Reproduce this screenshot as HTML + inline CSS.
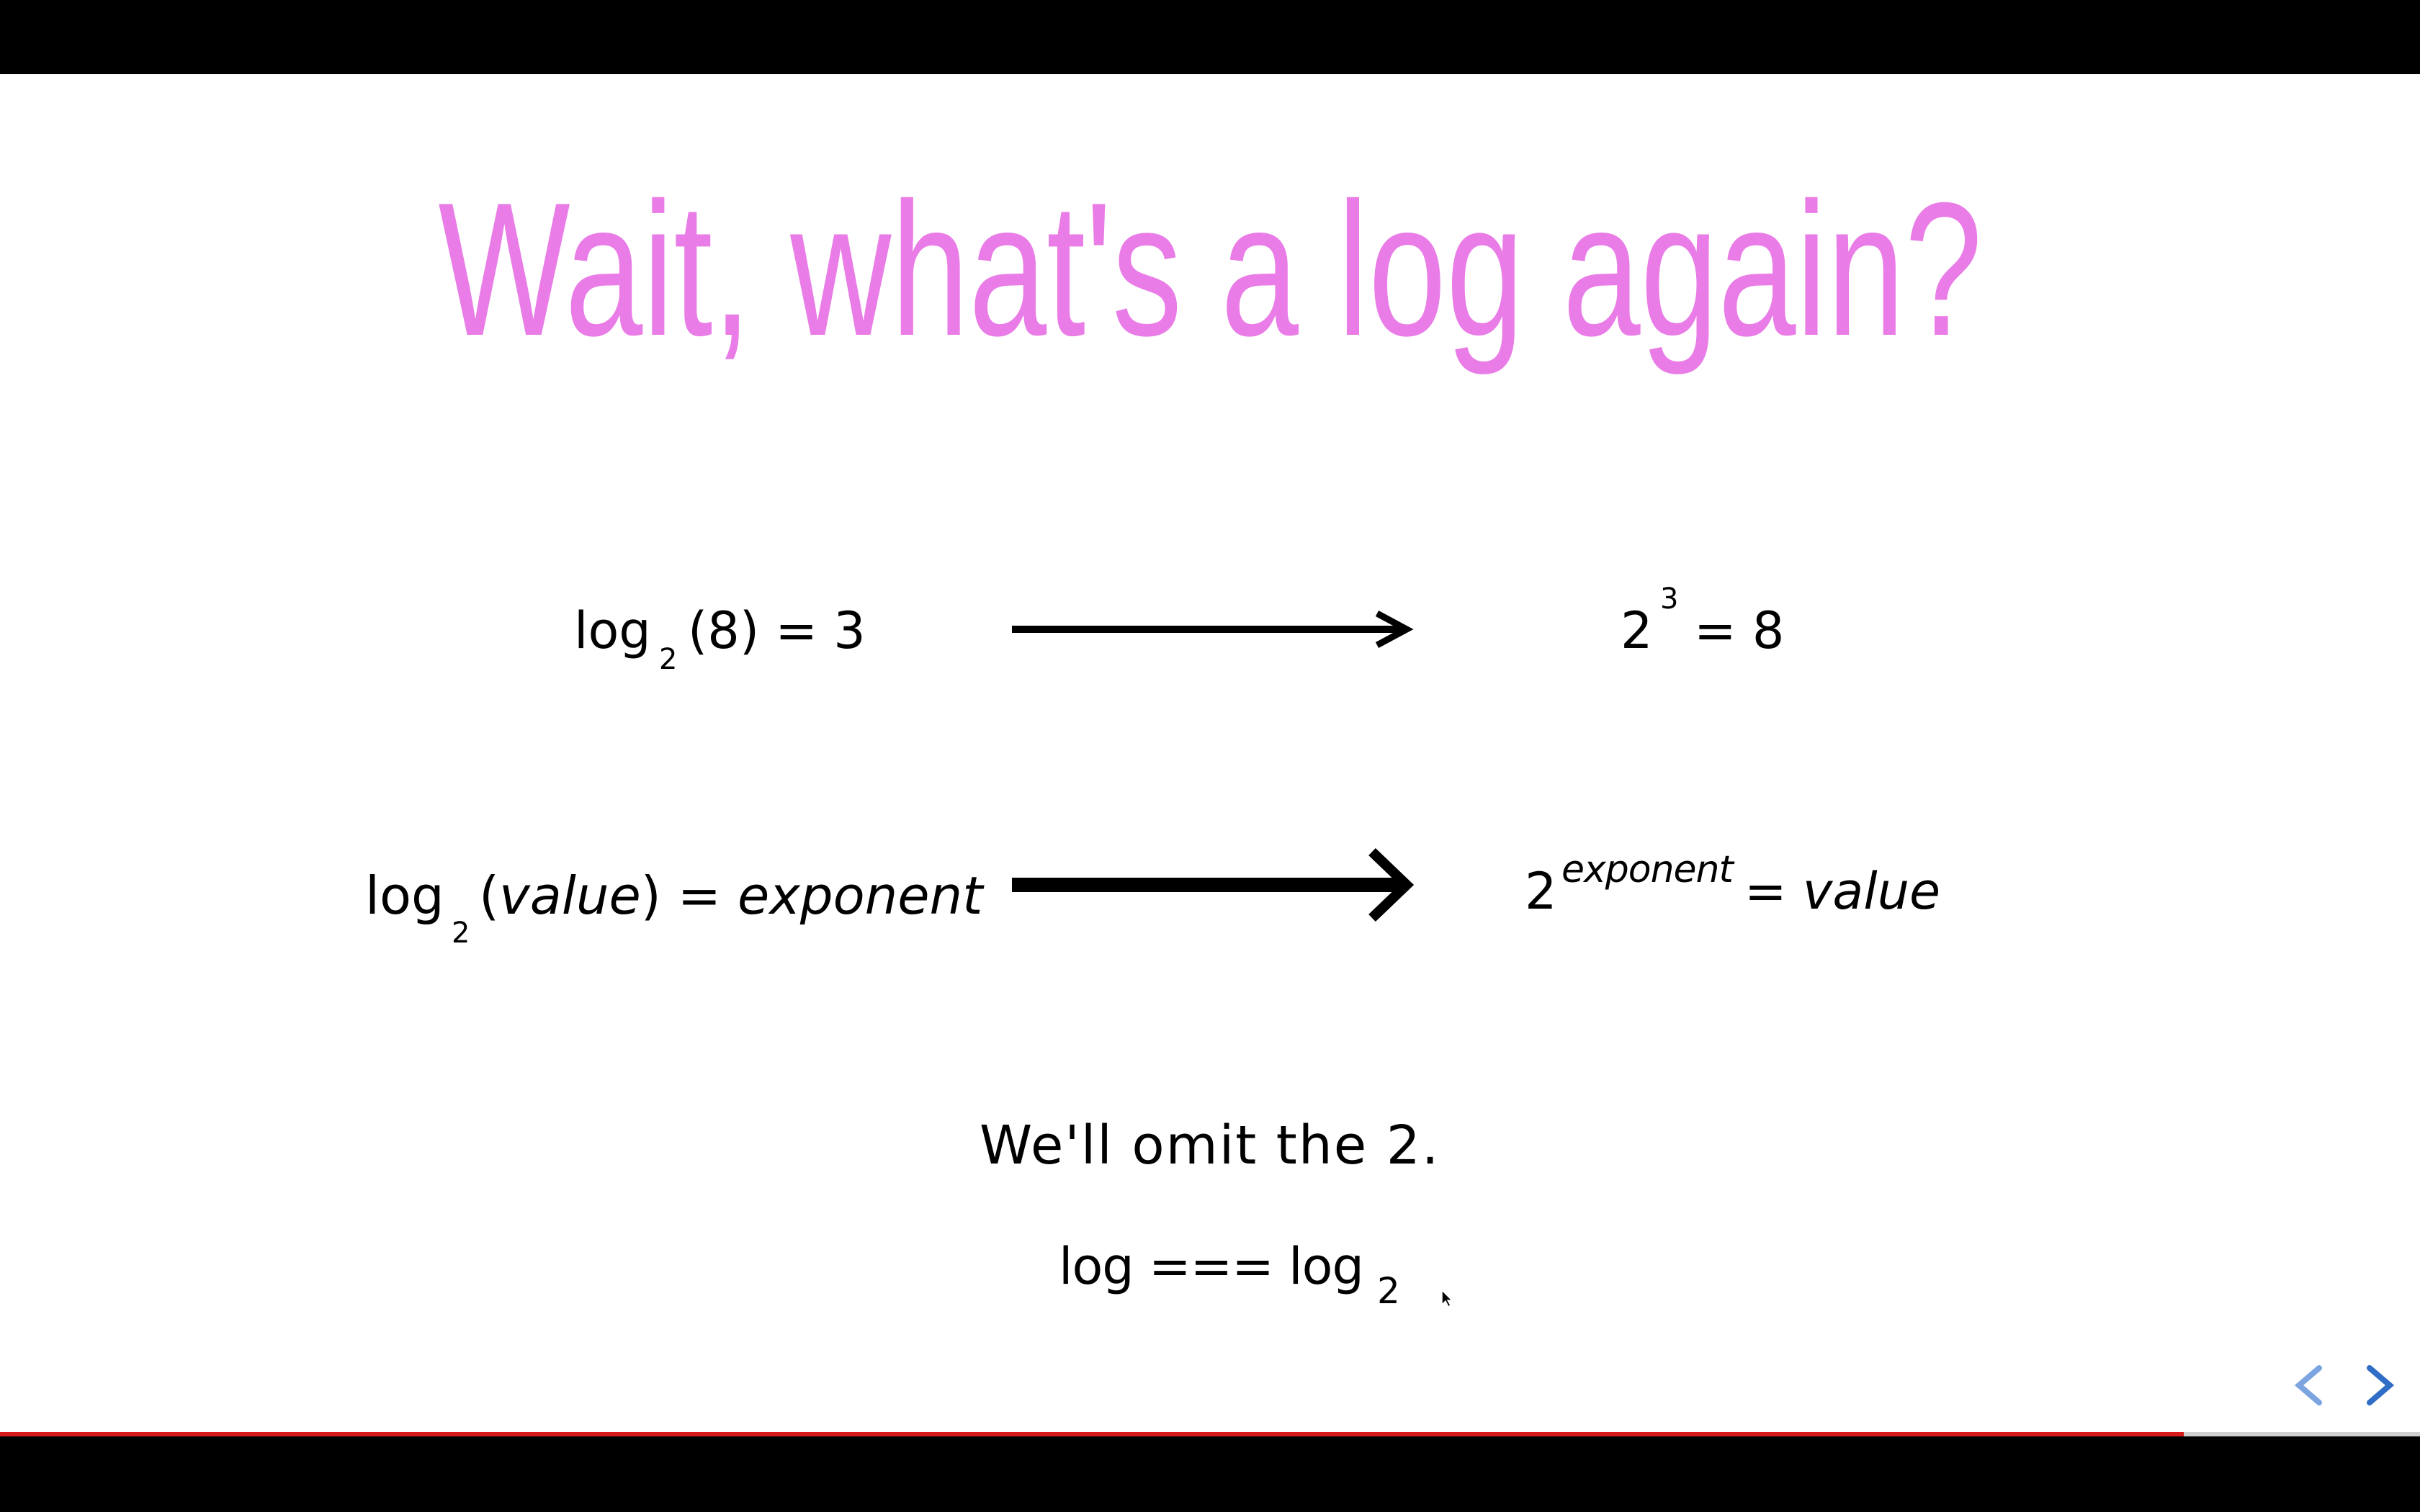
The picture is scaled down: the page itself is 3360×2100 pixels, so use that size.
<!DOCTYPE html>
<html><head><meta charset="utf-8"><style>
body{margin:0;width:3360px;height:2100px;background:#000;position:relative;overflow:hidden}
.slide{position:absolute;left:0;top:103px;width:3360px;height:1892px;background:#fff}
.t{position:absolute;line-height:1;white-space:nowrap;color:#000;font-family:"DejaVu Sans","Liberation Sans",sans-serif}
.title{position:absolute;left:0;width:3360px;top:242px;text-align:center;line-height:1;font-family:"Liberation Sans Narrow","Liberation Sans",sans-serif;font-size:264px;color:#e97ce6}
.title span{display:inline-block;transform:scaleX(0.735);transform-origin:50% 50%;margin-left:0px}
i{font-style:italic}
</style></head><body>
<div class="slide"></div>
<div class="title"><span>Wait, what's a log again?</span></div>

<!-- row 1 -->
<div class="t" style="left:797px;top:841px;font-size:70px">log</div>
<div class="t" style="left:915px;top:896px;font-size:40px">2</div>
<div class="t" style="left:955px;top:841px;font-size:70px">(8) = 3</div>
<svg style="position:absolute;left:1405px;top:847px" width="565" height="56">
<line x1="0" y1="27" x2="545" y2="27" stroke="#000" stroke-width="10"/>
<polyline points="507,5 548,27 507,49" fill="none" stroke="#000" stroke-width="9"/>
</svg>
<div class="t" style="left:2250px;top:841px;font-size:70px">2</div>
<div class="t" style="left:2305px;top:812px;font-size:40px">3</div>
<div class="t" style="left:2352px;top:841px;font-size:70px">= 8</div>

<!-- row 2 -->
<div class="t" style="left:507px;top:1208px;font-size:72px">log</div>
<div class="t" style="left:627px;top:1276px;font-size:40px">2</div>
<div class="t" style="left:665px;top:1208px;font-size:72px">(<i>value</i>) = <i>exponent</i></div>
<svg style="position:absolute;left:1405px;top:1177px" width="565" height="110">
<line x1="0" y1="52" x2="545" y2="52" stroke="#000" stroke-width="20"/>
<polyline points="500,6 548,52 500,98" fill="none" stroke="#000" stroke-width="14"/>
</svg>
<div class="t" style="left:2117px;top:1203px;font-size:70px">2</div>
<div class="t" style="left:2168px;top:1182px;font-size:52px;letter-spacing:-1px"><i>exponent</i></div>
<div class="t" style="left:2422px;top:1203px;font-size:70px">= <i>value</i></div>

<!-- bottom -->
<div class="t" style="left:1360px;top:1554px;font-size:74px;letter-spacing:2px">We'll omit the 2.</div>
<div class="t" style="left:1470px;top:1724px;font-size:70px;letter-spacing:-1px">log === log</div>
<div class="t" style="left:1912px;top:1768px;font-size:50px">2</div>
<svg style="position:absolute;left:2000px;top:1790px" width="20" height="30">
<path d="M2 2 L2 22 L7 17 L11 25 L14 23 L10 16 L16 16 Z" fill="#000" stroke="#fff" stroke-width="1.5"/>
</svg>

<!-- nav -->
<svg style="position:absolute;left:3180px;top:1890px" width="150" height="70">
<polyline points="40,10 12,34 40,58" fill="none" stroke="#7ba4e0" stroke-width="8" stroke-linecap="round"/>
<polyline points="110,10 138,34 110,58" fill="none" stroke="#2f6dc6" stroke-width="8" stroke-linecap="round"/>
</svg>

<div style="position:absolute;left:0;top:1989px;width:3032px;height:6px;background:#d81a1a"></div>
<div style="position:absolute;left:3032px;top:1989px;width:328px;height:6px;background:#cfcfcf"></div>
</body></html>
